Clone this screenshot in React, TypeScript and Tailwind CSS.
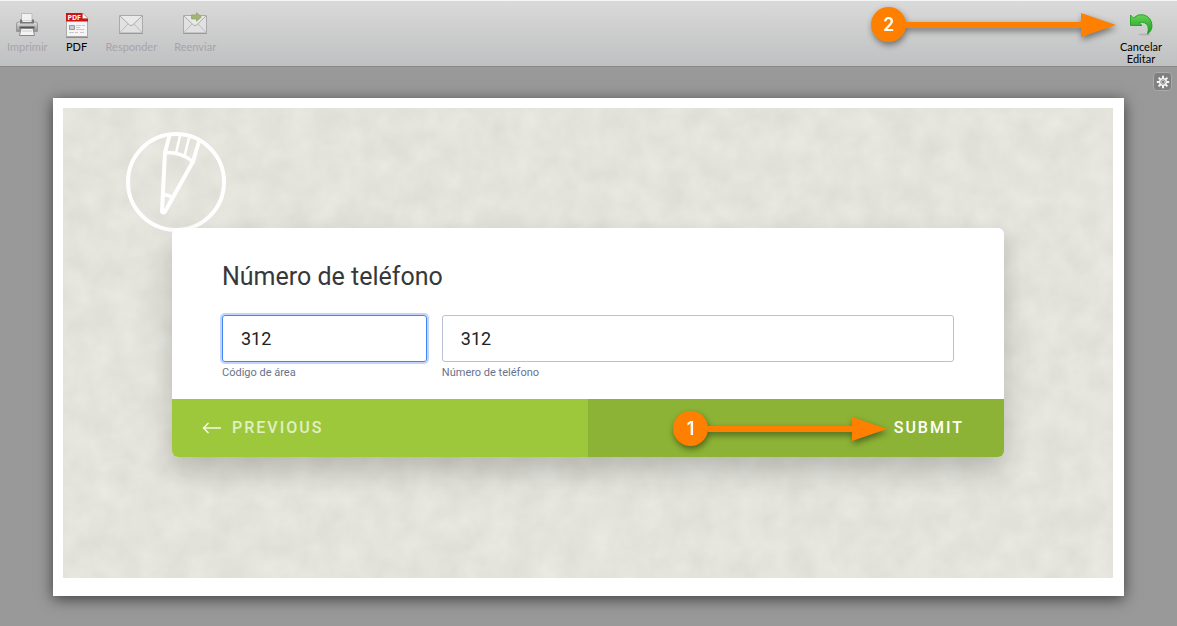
import { useState } from "react";
import type { ReactNode } from "react";

function PrinterIcon() {
  return (
    <svg viewBox="0 0 24 26" className="w-6 h-[26px]">
      <defs>
        <linearGradient id="printer" x1="0" y1="0" x2="0" y2="1">
          <stop offset="0" stopColor="#e2e2e2" />
          <stop offset="1" stopColor="#8c8c8c" />
        </linearGradient>
      </defs>
      <path d="M6.500 1.500h10.500V9H6.500z" fill="#f1f1f1" stroke="#bbb" />
      <path d="M1.500 12q0-2 2-2h17q2 0 2 2v7.500h-21z" fill="url(#printer)" stroke="#999" />
      <path d="M5 7.500v4h14v-4h-2V9H7V7.500z" fill="#777" />
      <path d="M7.500 9.500h9" stroke="#eee" />
      <path d="M4.500 15.500h15" stroke="#555" strokeWidth="2" />
      <path d="M6 16.500h12l1.500 7H4.500z" fill="#f4f4f4" stroke="#888" />
      <path d="M7 19h10" stroke="#ccc" />
    </svg>
  );
}

function PdfIcon() {
  return (
    <svg viewBox="0 0 24 26" className="w-6 h-[26px]">
      <path d="M1 24.500h22v1.500H1z" fill="#8d8d8d" />
      <path d="M1.500 1.500h16l5 5v18h-21z" fill="#f5f5f5" stroke="#aaa" />
      <path d="M1 1h16.500L23 6.500V9.500H1z" fill="#cb1512" />
      <path d="M17.500 1v5.500H23z" fill="#fff" stroke="#b66" strokeWidth=".5" />
      <text x="2.500" y="7.900" fontSize="7" fontWeight="700" fontFamily="Open Sans, sans-serif" fill="#fff">
        PDF
      </text>
      <path d="M4.500 13.500h5v4h-5z" fill="#ccc" stroke="#999" />
      <path d="M11 13.500h5M17 13.500h3M11 15.500h4M11 17.500h8M4 20.500h5M10 20.500h3M15 20.500h4" stroke="#c8c8c8" />
    </svg>
  );
}

function MailIcon({ forward = false }: { forward?: boolean }) {
  return (
    <svg viewBox="0 0 24 26" className="w-6 h-[26px]">
      <path d="M.5 3.500h23v17.500H.5z" fill="#e1e1e1" stroke="#aaa" />
      <path d="M1 20.500 9 12M23 20.500 15 12" stroke="#bbb" fill="none" />
      <path d="M1 4l9.500 9q1.500 1.200 3 0L23 4" fill="#e9e9e9" stroke="#aaa" />
      <path d="M0 21.500h24" stroke="#999" />
      {forward && <path d="M8.500 3h5V.8L18.500 5l-5 4.200V7h-5z" fill="#a3b573" stroke="#8e9f66" strokeWidth=".7" />}
    </svg>
  );
}

function UndoIcon() {
  return (
    <svg viewBox="0 0 24 26" className="w-6 h-[26px]">
      <defs>
        <linearGradient id="undo" x1="0" y1="0" x2="0" y2="1">
          <stop offset="0" stopColor="#68d35a" />
          <stop offset="1" stopColor="#169a1c" />
        </linearGradient>
      </defs>
      <ellipse cx="15.500" cy="22.500" rx="6" ry="1" fill="#000" opacity=".12" />
      <path
        d="M1.500 3 4.500 6Q9 1.500 14.500 2.800 22.500 5 23 13.500 23 19 18.500 22 21 13 15.500 10.800 12.500 9.800 10.300 11L13 13.500H1.500z"
        fill="url(#undo)"
        stroke="#159a1b"
        strokeWidth=".8"
      />
    </svg>
  );
}

function GearIcon() {
  return (
    <svg viewBox="0 0 14 14" className="w-3.5 h-3.5">
      <g stroke="#f4f4f4" strokeWidth="2">
        <path d="M7 .8v12.400M.8 7h12.400M2.600 2.600l8.800 8.800M11.400 2.600l-8.800 8.800" />
      </g>
      <circle cx="7" cy="7" r="4" fill="#f4f4f4" />
      <circle cx="7" cy="7" r="2.300" fill="#ccc" stroke="#888" strokeWidth=".8" />
      <circle cx="7" cy="7" r="1" fill="#666" />
    </svg>
  );
}

function PencilLogo() {
  return (
    <svg
      viewBox="0 0 100 100"
      className="absolute left-[63px] top-6 w-[100px] h-[100px]"
      fill="none"
      stroke="#fff"
      strokeWidth="4"
      strokeLinejoin="round"
    >
      <circle cx="50" cy="50" r="48" />
      <path d="M43.500 3.500 39 20.500 36 79.500q1 2 3 0L67 29.500 73 9.500" />
      <path d="M39 20.500q16-.5 28 9M38 63q5-.5 8 3" strokeWidth="3.500" />
      <path d="M54 4 50 21M63 6 58.500 24" strokeWidth="2.500" />
    </svg>
  );
}

function PaperTexture() {
  return (
    <svg className="absolute inset-0 w-full h-full" aria-hidden="true">
      <filter id="paper" x="0" y="0" width="100%" height="100%" colorInterpolationFilters="sRGB">
        <feTurbulence type="fractalNoise" baseFrequency="0.040" numOctaves="3" seed="4" />
        <feColorMatrix values="0.060 0 0 0 0.862  0.060 0 0 0 0.862  0.070 0 0 0 0.828  0 0 0 0 1" />
      </filter>
      <rect width="100%" height="100%" filter="url(#paper)" />
    </svg>
  );
}

type ToolButtonProps = {
  label: string;
  icon: ReactNode;
  disabled?: boolean;
};

function ToolButton({ label, icon, disabled }: ToolButtonProps) {
  return (
    <button
      type="button"
      disabled={disabled}
      className="flex flex-col items-center gap-[3px] text-[11px] leading-3 text-black disabled:text-[#a9a3a9]"
    >
      {icon}
      <span>{label}</span>
    </button>
  );
}

function Callout({ step, className }: { step: number; className: string }) {
  return (
    <span
      className={`pointer-events-none absolute flex items-center drop-shadow-[1px_3px_3px_rgba(0,0,0,0.45)] ${className}`}
    >
      <span className="flex w-[35px] h-[35px] shrink-0 items-center justify-center rounded-full bg-[#ff8000] font-[Inter,sans-serif] text-lg font-semibold tracking-normal text-white">
        {step}
      </span>
      <span className="h-[6px] grow bg-[#ff8000]" />
      <svg viewBox="0 0 35 24" className="w-[35px] h-6 shrink-0">
        <path d="M0 0 35 12 0 24z" fill="#ff8000" />
      </svg>
    </span>
  );
}

export default function App() {
  const [area, setArea] = useState("312");
  const [phone, setPhone] = useState("312");

  return (
    <div className="min-h-screen bg-[#999] font-[Roboto,sans-serif]">
      <header className="relative flex h-[67px] items-start justify-between border-b border-[#888] bg-linear-to-b from-[#dadada] to-[#bfc0c1] pl-[7px] pr-3 pt-3 font-[Lato,sans-serif] shadow-[inset_0_1px_0_#f5f5f5]">
        <div className="flex gap-[17px]">
          <ToolButton label="Imprimir" icon={<PrinterIcon />} disabled />
          <ToolButton label="PDF" icon={<PdfIcon />} />
          <ToolButton label="Responder" icon={<MailIcon />} disabled />
          <ToolButton label="Reenviar" icon={<MailIcon forward />} disabled />
        </div>
        <div className="flex w-12 justify-center">
          <ToolButton label="Cancelar Editar" icon={<UndoIcon />} />
        </div>
        <Callout step={2} className="right-[61px] top-[7px] w-[245px]" />
      </header>

      <div className="flex h-[31px] justify-end pr-[5px] pt-[5px]">
        <button
          type="button"
          aria-label="Configuración"
          className="flex w-[19px] h-[19px] items-center justify-center rounded border border-[#aaa] bg-[#808080]"
        >
          <GearIcon />
        </button>
      </div>

      <main className="mx-[53px] bg-white pl-2.5 pr-[11px] pt-2.5 pb-[18px] shadow-[0_3px_14px_rgba(0,0,0,0.6)]">
        <div className="relative overflow-hidden bg-[#e4e4dc] px-[109px] pt-[120px] pb-[121px]">
          <PaperTexture />
          <PencilLogo />

          <form
            onSubmit={(e) => e.preventDefault()}
            className="relative rounded-md bg-white shadow-[0_14px_28px_rgba(0,0,0,0.2)]"
          >
            <div className="px-[50px] pt-[33px] pb-5">
              <h1 className="text-[25px] leading-8 text-[#363839]">Número de teléfono</h1>
              <div className="mt-[22px] grid grid-cols-[2fr_5fr] gap-[15px]">
                <div>
                  <input
                    id="area"
                    value={area}
                    onChange={(e) => setArea(e.target.value)}
                    className="block h-[47px] w-full rounded-[3px] border border-[#4285f4] px-[18px] text-lg text-[#222] shadow-[0_0_0_2px_#c2d5f8] outline-none"
                  />
                  <label htmlFor="area" className="mt-[5px] block text-[11px] leading-3 text-[#66738f]">
                    Código de área
                  </label>
                </div>
                <div>
                  <input
                    id="phone"
                    value={phone}
                    onChange={(e) => setPhone(e.target.value)}
                    className="block h-[47px] w-full rounded-[3px] border border-[#b7c0d8] px-[18px] text-lg text-[#222] outline-none"
                  />
                  <label htmlFor="phone" className="mt-[5px] block text-[11px] leading-3 text-[#66738f]">
                    Número de teléfono
                  </label>
                </div>
              </div>
            </div>

            <div className="grid h-[58px] grid-cols-2 overflow-hidden rounded-b-md text-base font-medium tracking-[2px]">
              <button type="button" className="flex items-center gap-2.5 bg-[#9dc83b] pl-[30px] text-[#e1efc3]">
                <svg viewBox="0 0 20 12" className="w-5 h-3" fill="none" stroke="#f2f8e5" strokeWidth="1.500">
                  <path d="M6.500 1 1.500 6l5 5M1.500 6H19" />
                </svg>
                PREVIOUS
              </button>
              <button type="submit" className="relative bg-[#8cb335] pr-10 text-right text-white">
                <Callout step={1} className="right-[117px] top-3 w-[214px]" />
                SUBMIT
              </button>
            </div>
          </form>
        </div>
      </main>
    </div>
  );
}
